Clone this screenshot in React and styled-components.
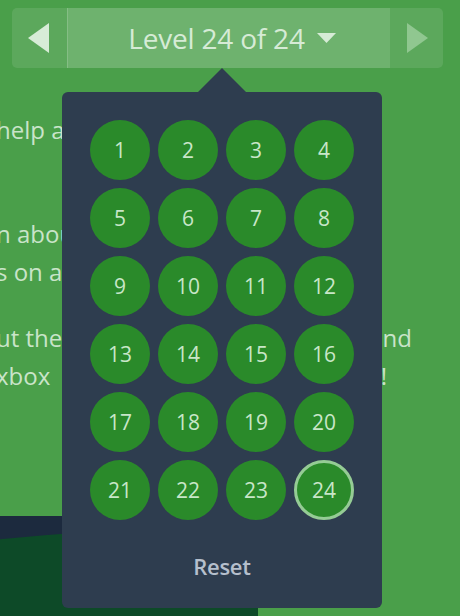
import React from "react";
import styled, { createGlobalStyle } from "styled-components";

const GlobalStyle = createGlobalStyle`
  html, body {
    margin: 0;
    padding: 0;
    background: #4a9f4a;
  }
  body {
    font-family: "Open Sans", "Noto Sans", sans-serif;
  }
`;

const Page = styled.div`
  position: relative;
  display: flex;
  flex-direction: column;
  width: 460px;
  height: 616px;
  overflow: hidden;
  background: #4a9f4a;
`;

const Nav = styled.nav`
  display: flex;
  height: 60px;
  margin: 8px 17px 0 12px;
  border-radius: 5px;
  overflow: hidden;
`;

const ArrowButton = styled.div`
  display: flex;
  align-items: center;
  justify-content: center;
  width: ${p => p.$w}px;
  background: rgba(255, 255, 255, 0.1);
  border-right: ${p => (p.$divider ? "1px solid rgba(255,255,255,0.25)" : "none")};

  svg {
    display: block;
    margin-left: ${p => p.$shift || 0}px;
  }
`;

const LevelButton = styled.div`
  flex: 1;
  display: flex;
  align-items: center;
  justify-content: center;
  gap: 12px;
  padding-left: 6px;
  background: rgba(255, 255, 255, 0.2);
  color: #d6ebd6;
  font-size: 28px;
  font-weight: 500;
  letter-spacing: -0.2px;
`;

const Content = styled.div`
  flex: 1;
  width: 416px;
  margin-left: -4px;
  padding-top: 43px;
  color: #c9e4c9;
  font-size: 24px;
  font-weight: 500;
`;

const Paragraph = styled.div`
  margin-bottom: 28px;
`;

const Line = styled.div`
  display: flex;
  justify-content: ${p => (p.$center ? "center" : "space-between")};
  width: ${p => (p.$w ? `${p.$w}px` : "100%")};
  height: 38px;
  line-height: 38px;
  white-space: nowrap;
`;

const Board = styled.div`
  width: 258px;
  height: 100px;
  background: #1c2a3e;

  svg {
    display: block;
  }
`;

const Dropdown = styled.div`
  position: absolute;
  top: 92px;
  left: 62px;
  width: 320px;
  box-sizing: border-box;
  padding: 28px 28px 26px;
  background: #2e3d4f;
  border-radius: 6px;

  &::before {
    content: "";
    position: absolute;
    top: -24px;
    left: 136px;
    border: 24px solid transparent;
    border-top: 0;
    border-bottom-color: #2e3d4f;
  }
`;

const Grid = styled.div`
  display: grid;
  grid-template-columns: repeat(4, 60px);
  gap: 8px;
`;

const LevelCircle = styled.div`
  display: flex;
  align-items: center;
  justify-content: center;
  width: 60px;
  height: 60px;
  box-sizing: border-box;
  border-radius: 50%;
  background: #2a8a2a;
  border: ${p => (p.$current ? "3px solid #95cc95" : "none")};
  color: #c8e6c8;
  font-size: 21px;
  font-weight: 500;
  cursor: pointer;
`;

const Reset = styled.div`
  margin-top: 30px;
  height: 32px;
  line-height: 32px;
  text-align: center;
  color: #b5bfcc;
  font-size: 22px;
  font-weight: 600;
  letter-spacing: -0.3px;
  cursor: pointer;
`;

const levels = Array.from({ length: 24 }, (_, i) => i + 1);

export default function App() {
  return (
    <Page>
      <GlobalStyle />
      <Nav>
        <ArrowButton $w={55} $divider $shift={-3}>
          <svg width="21" height="30" viewBox="0 0 21 30">
            <polygon points="21,0 21,30 0,15" fill="#d7ecd7" />
          </svg>
        </ArrowButton>
        <LevelButton>
          <span>Level 24 of 24</span>
          <svg width="19" height="10" viewBox="0 0 19 10">
            <polygon points="0,0 19,0 9.5,10" fill="#d6ebd6" />
          </svg>
        </LevelButton>
        <ArrowButton $w={53} $shift={2}>
          <svg width="21" height="30" viewBox="0 0 21 30">
            <polygon points="0,0 21,15 0,30" fill="#90c790" />
          </svg>
        </ArrowButton>
      </Nav>

      <Content>
        <Paragraph>
          <Line>help all the frogs find their</Line>
          <Line $center>lilypads.</Line>
        </Paragraph>
        <Paragraph>
          <Line>n about the other flexbox</Line>
          <Line>s on a board of your own.</Line>
        </Paragraph>
        <Paragraph>
          <Line>
            <span>ut the code</span>
            <span>and</span>
          </Line>
          <Line $w={391}>
            <span>xbox</span>
            <span>Froggy!</span>
          </Line>
        </Paragraph>
      </Content>

      <Board>
        <svg width="258" height="100" viewBox="0 0 258 100">
          <ellipse cx="220" cy="384" rx="900" ry="372" fill="#0d4a28" />
        </svg>
      </Board>

      <Dropdown>
        <Grid>
          {levels.map(n => (
            <LevelCircle key={n} $current={n === 24}>
              {n}
            </LevelCircle>
          ))}
        </Grid>
        <Reset>Reset</Reset>
      </Dropdown>
    </Page>
  );
}
